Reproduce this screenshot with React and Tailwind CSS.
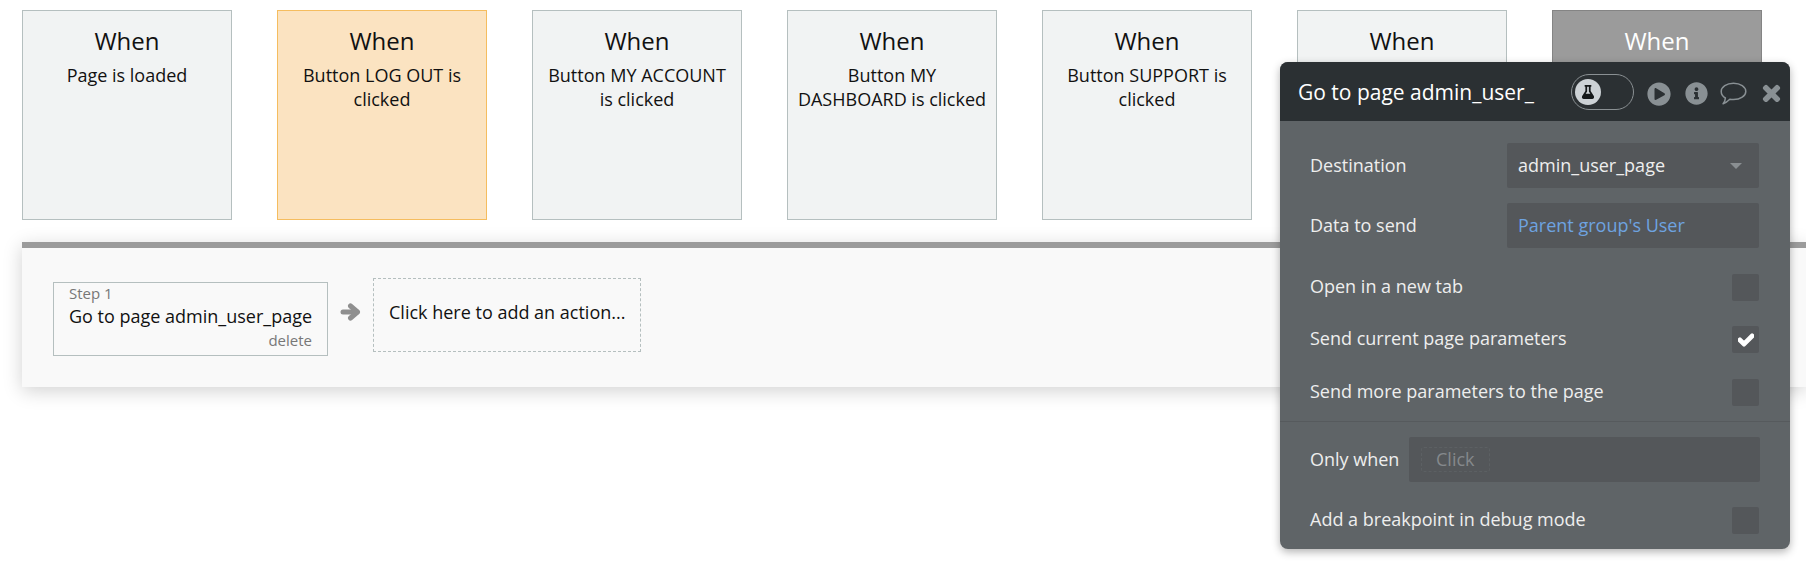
import React from "react";
import { FaCheck, FaFlask, FaInfoCircle, FaPlayCircle, FaTimes } from "react-icons/fa";

const triggers = [
  { text: "Page is loaded", look: "bg-[#f1f3f3] border-[#b5bfbf] text-[#111]" },
  { text: "Button LOG OUT is clicked", look: "bg-[#fbe3c1] border-[#f5bd5f] text-[#111]" },
  { text: "Button MY ACCOUNT is clicked", look: "bg-[#f1f3f3] border-[#b5bfbf] text-[#111]" },
  { text: "Button MY DASHBOARD is clicked", look: "bg-[#f1f3f3] border-[#b5bfbf] text-[#111]" },
  { text: "Button SUPPORT is clicked", look: "bg-[#f1f3f3] border-[#b5bfbf] text-[#111]" },
  { text: "", look: "bg-[#f1f3f3] border-[#b5bfbf] text-[#111]" },
  { text: "", look: "bg-[#9b9b9b] border-[#848484] text-white" },
];

function Trigger({ text, look }) {
  return (
    <div className={`w-[210px] h-[210px] shrink-0 border px-2 text-center ${look}`}>
      <div className="mt-[14px] text-[24px] leading-[32px]">When</div>
      <div className="mt-[6px] text-[18px] leading-[24px]">{text}</div>
    </div>
  );
}

function Check({ checked }) {
  return (
    <div className="w-[27px] h-[27px] rounded-[2px] bg-[#54575a] flex items-center justify-center text-white text-[16px]">
      {checked && <FaCheck stroke="currentColor" strokeWidth="50" />}
    </div>
  );
}

function CheckRow({ label, checked, className = "" }) {
  return (
    <div className={`h-[27px] flex items-center justify-between pl-[30px] pr-[31px] ${className}`}>
      <span className="pb-[3px]">{label}</span>
      <Check checked={checked} />
    </div>
  );
}

function InputRow({ label, className = "", children }) {
  return (
    <div className={`h-[45px] flex items-center justify-between pl-[30px] pr-[31px] ${className}`}>
      <span>{label}</span>
      <div className="w-[252px] h-[45px] rounded-[2px] bg-[#54575a] flex items-center justify-between pl-[11px] pr-[17px]">
        {children}
      </div>
    </div>
  );
}

export default function App() {
  return (
    <div className="relative h-[586px] overflow-hidden bg-white font-['Open_Sans',sans-serif]">
      <div className="flex gap-[45px] pl-[22px] pt-[10px]">
        {triggers.map((t, i) => (
          <Trigger key={i} text={t.text} look={t.look} />
        ))}
      </div>

      {/* actions strip */}
      <div className="mt-[22px] ml-[22px] h-[145px] border-t-[6px] border-[#9b9b9b] bg-[#f9f9f9] shadow-[0_4px_18px_rgba(0,0,0,0.18)] flex items-start pl-[31px] pt-[30px]">
        <div className="mt-[4px] w-[275px] h-[74px] border border-[#b5bfbf] pl-[15px] pr-[15px]">
          <div className="text-[15px] leading-[18px] mt-[1px] text-[#777]">Step 1</div>
          <div className="text-[18px] leading-[24px] mt-[2px] text-[#111] whitespace-nowrap">Go to page admin_user_page</div>
          <div className="text-[15px] leading-[20px] mt-[2px] text-right text-[#777]">delete</div>
        </div>
        <svg viewBox="0 0 21 18" className="w-[21px] h-[18px] mt-[25px] ml-[12px] mr-[12px] text-[#8f8f8f]" fill="none" stroke="currentColor" strokeWidth="5" strokeLinecap="round" strokeLinejoin="round">
          <path d="M3 9h14" />
          <path d="M10.5 3l7 6-7 6" />
        </svg>
        <div className="w-[268px] h-[74px] border border-dashed border-[#b5bfbf] pl-[15px] pt-[21px] text-[18px] leading-[24px] text-[#111] whitespace-nowrap">
          Click here to add an action...
        </div>
      </div>

      {/* action property editor */}
      <div className="absolute left-[1280px] top-[62px] w-[510px] h-[487px] rounded-[8px] bg-[#5f6467] text-[#eeeeee] text-[18px] shadow-[0_3px_8px_rgba(0,0,0,0.3)] overflow-hidden">
        <div className="h-[59px] bg-[#2b3033] flex items-center pl-[18px] text-white">
          <span className="w-[273px] text-[21px] whitespace-nowrap mt-[3px]">Go to page admin_user_</span>
          <div className="w-[63px] h-[36px] mt-[1px] rounded-full border border-[#8a9093] flex items-center pl-[3px]">
            <div className="w-[26px] h-[26px] rounded-full bg-[#cdd2d6] flex items-center justify-center text-[14px] text-[#15181a]">
              <FaFlask />
            </div>
          </div>
          <FaPlayCircle className="ml-[13px] mt-[4px] text-[24px] text-[#899094]" />
          <FaInfoCircle className="ml-[14px] mt-[4px] text-[23px] text-[#899094]" />
          <svg viewBox="0 0 27 23" className="w-[27px] h-[23px] ml-[12px] mt-[4px] text-[#899094]" fill="none" stroke="currentColor" strokeWidth="1.5" strokeLinejoin="round">
            <path d="M13.500 1.200c6.900 0 12.300 3.600 12.300 8.200s-5.400 8.200-12.300 8.200c-1.300 0-2.500-.1-3.700-.4-1.600 1.600-4 3.600-6.700 4.600 1.100-1.500 2.200-3.600 2.300-5.800C3 14.500 1.200 12.100 1.200 9.400c0-4.600 5.400-8.200 12.300-8.200z" />
          </svg>
          <FaTimes className="ml-[13px] mt-[4px] text-[23px] text-[#899094]" stroke="currentColor" strokeWidth="30" />
        </div>

        <InputRow label="Destination" className="mt-[22px]">
          <span>admin_user_page</span>
          <span className="border-x-[6px] border-t-[6px] border-x-transparent border-t-[#8a8f92]" />
        </InputRow>
        <InputRow label="Data to send" className="mt-[15px]">
          <span className="text-[#6ea3e0]">Parent group's User</span>
        </InputRow>
        <CheckRow label="Open in a new tab" className="mt-[26px]" />
        <CheckRow label="Send current page parameters" checked className="mt-[25px]" />
        <CheckRow label="Send more parameters to the page" className="mt-[26px]" />
        <div className="mt-[15px] border-t border-[#565a5d]" />
        <div className="mt-[15px] h-[45px] flex items-center pl-[30px] pr-[30px]">
          <span className="whitespace-nowrap">Only when</span>
          <div className="ml-auto w-[351px] h-[45px] rounded-[2px] bg-[#54575a] flex items-center pl-[12px]">
            <span className="h-[25px] px-[14px] rounded-[3px] border border-dashed border-[#5c6063] text-[#85898c] flex items-center">Click</span>
          </div>
        </div>
        <CheckRow label="Add a breakpoint in debug mode" className="mt-[25px]" />
      </div>
    </div>
  );
}
